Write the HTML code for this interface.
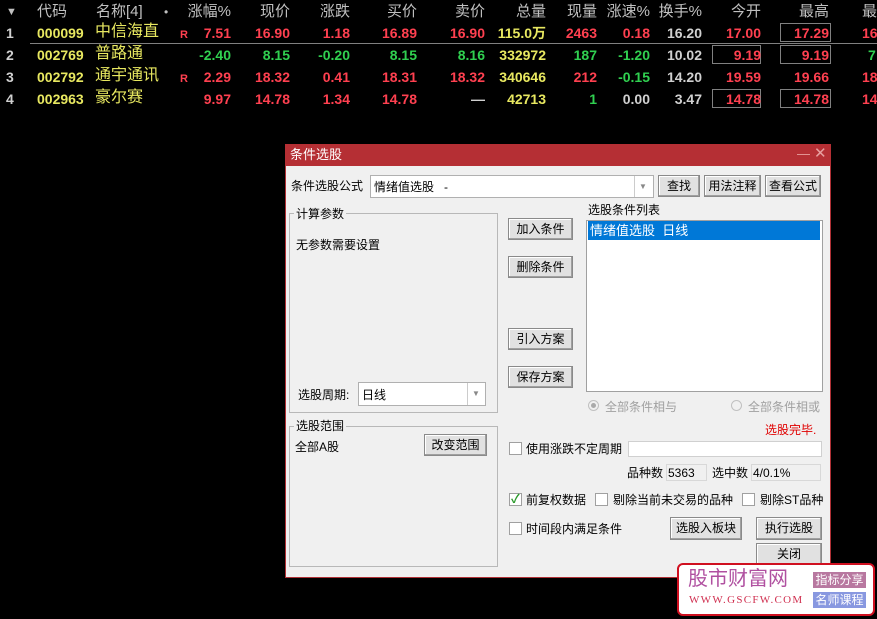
<!DOCTYPE html>
<html><head><meta charset="utf-8">
<style>
*{margin:0;padding:0;box-sizing:border-box}
body{width:877px;height:619px;background:#000;position:relative;overflow:hidden;font-family:"Liberation Sans","Noto Sans CJK SC",sans-serif}
.a{position:absolute;white-space:nowrap}
.h{font-size:15px;color:#c0c0c0;top:3px;line-height:18px}
.r{font-size:14px;font-weight:bold;line-height:18px}
.R{color:#ff4050}.G{color:#30d050}.Y{color:#e8e860}.W{color:#d0d0d0}
.nm{font-size:16px;color:#e8e860;font-weight:normal}
.bx{position:absolute;border:1px solid #808080}
.d{font-size:12px;color:#000;line-height:14px}
.btn{position:absolute;background:#e1e1e1;border:1px solid #8a8a8a;font-size:12px;text-align:center;color:#000;box-shadow:inset -1px -1px 0 #a0a0a0,inset 1px 1px 0 #fff}
.grp{position:absolute;border:1px solid #b8b8b8}
.cb{position:absolute;width:13px;height:13px;border:1px solid #a0a0a0;background:#fff}
.inp{position:absolute;background:#fff;border:1px solid #b0b0b0}
</style></head><body>
<!-- header -->
<div class="a h" style="left:6px;font-size:11px">▼</div>
<div class="a h" style="left:37px">代码</div>
<div class="a h" style="left:96px">名称[4]</div>
<div class="a h" style="left:164px;font-size:12px">•</div>
<div class="a h" style="right:646px">涨幅%</div>
<div class="a h" style="right:587px">现价</div>
<div class="a h" style="right:527px">涨跌</div>
<div class="a h" style="right:460px">买价</div>
<div class="a h" style="right:392px">卖价</div>
<div class="a h" style="right:331px">总量</div>
<div class="a h" style="right:280px">现量</div>
<div class="a h" style="right:227px">涨速%</div>
<div class="a h" style="right:175px">换手%</div>
<div class="a h" style="right:116px">今开</div>
<div class="a h" style="right:48px">最高</div>
<div class="a h" style="left:862px">最</div>
<div class="a" style="left:30px;top:43px;width:847px;height:1px;background:#808080"></div>
<!-- rows -->
<div class="bx" style="left:780px;top:23px;width:51px;height:19px"></div>
<div class="bx" style="left:712px;top:45px;width:49px;height:19px"></div>
<div class="bx" style="left:780px;top:45px;width:51px;height:19px"></div>
<div class="bx" style="left:712px;top:89px;width:49px;height:19px"></div>
<div class="bx" style="left:780px;top:89px;width:51px;height:19px"></div>

<div style="position:absolute;left:0;top:24px;width:877px">
<div class="a r W" style="left:6px">1</div><div class="a r Y" style="left:37px">000099</div><div class="a r nm" style="left:95px;top:-1px">中信海直</div>
<div class="a r R" style="left:180px;font-size:11px;top:2px">R</div>
<div class="a r R" style="right:646px">7.51</div><div class="a r R" style="right:587px">16.90</div><div class="a r R" style="right:527px">1.18</div><div class="a r R" style="right:460px">16.89</div><div class="a r R" style="right:392px">16.90</div><div class="a r Y" style="right:331px">115.0万</div><div class="a r R" style="right:280px">2463</div><div class="a r R" style="right:227px">0.18</div><div class="a r W" style="right:175px">16.20</div><div class="a r R" style="right:116px">17.00</div><div class="a r R" style="right:48px">17.29</div><div class="a r R" style="left:862px">16</div>
</div>
<div style="position:absolute;left:0;top:46px;width:877px">
<div class="a r W" style="left:6px">2</div><div class="a r Y" style="left:37px">002769</div><div class="a r nm" style="left:95px;top:-1px">普路通</div>
<div class="a r G" style="right:646px">-2.40</div><div class="a r G" style="right:587px">8.15</div><div class="a r G" style="right:527px">-0.20</div><div class="a r G" style="right:460px">8.15</div><div class="a r G" style="right:392px">8.16</div><div class="a r Y" style="right:331px">332972</div><div class="a r G" style="right:280px">187</div><div class="a r G" style="right:227px">-1.20</div><div class="a r W" style="right:175px">10.02</div><div class="a r R" style="right:116px">9.19</div><div class="a r R" style="right:48px">9.19</div><div class="a r G" style="left:868px">7</div>
</div>
<div style="position:absolute;left:0;top:68px;width:877px">
<div class="a r W" style="left:6px">3</div><div class="a r Y" style="left:37px">002792</div><div class="a r nm" style="left:95px;top:-1px">通宇通讯</div>
<div class="a r R" style="left:180px;font-size:11px;top:2px">R</div>
<div class="a r R" style="right:646px">2.29</div><div class="a r R" style="right:587px">18.32</div><div class="a r R" style="right:527px">0.41</div><div class="a r R" style="right:460px">18.31</div><div class="a r R" style="right:392px">18.32</div><div class="a r Y" style="right:331px">340646</div><div class="a r R" style="right:280px">212</div><div class="a r G" style="right:227px">-0.15</div><div class="a r W" style="right:175px">14.20</div><div class="a r R" style="right:116px">19.59</div><div class="a r R" style="right:48px">19.66</div><div class="a r R" style="left:862px">18</div>
</div>
<div style="position:absolute;left:0;top:90px;width:877px">
<div class="a r W" style="left:6px">4</div><div class="a r Y" style="left:37px">002963</div><div class="a r nm" style="left:95px;top:-1px">豪尔赛</div>
<div class="a r R" style="right:646px">9.97</div><div class="a r R" style="right:587px">14.78</div><div class="a r R" style="right:527px">1.34</div><div class="a r R" style="right:460px">14.78</div><div class="a r W" style="right:392px">—</div><div class="a r Y" style="right:331px">42713</div><div class="a r G" style="right:280px">1</div><div class="a r W" style="right:227px">0.00</div><div class="a r W" style="right:175px">3.47</div><div class="a r R" style="right:116px">14.78</div><div class="a r R" style="right:48px">14.78</div><div class="a r R" style="left:862px">14</div>
</div>

<!-- dialog -->
<div class="a" style="left:285px;top:144px;width:546px;height:434px;background:#f0f0f0;border:1px solid #b03035"></div>
<div class="a" style="left:285px;top:144px;width:546px;height:22px;background:#b52f34"></div>
<div class="a d" style="left:290px;top:148px;color:#fff;font-size:13px">条件选股</div>
<div class="a" style="left:797px;top:146px;color:#e8a0a0;font-size:13px">—</div>
<div class="a" style="left:814px;top:144px;color:#e8a0a0;font-size:15px">✕</div>

<div class="a d" style="left:291px;top:179px">条件选股公式</div>
<div class="inp" style="left:370px;top:175px;width:284px;height:23px"></div>
<div class="a d" style="left:374px;top:180px">情绪值选股&nbsp;&nbsp;&nbsp;-</div>
<div class="a" style="left:634px;top:176px;width:1px;height:21px;background:#ccc"></div>
<div class="a" style="left:639px;top:182px;color:#888;font-size:8px">▼</div>
<div class="btn" style="left:658px;top:175px;width:42px;height:22px;line-height:20px">查找</div>
<div class="btn" style="left:704px;top:175px;width:57px;height:22px;line-height:20px">用法注释</div>
<div class="btn" style="left:765px;top:175px;width:56px;height:22px;line-height:20px">查看公式</div>

<div class="grp" style="left:289px;top:213px;width:209px;height:200px"></div>
<div class="a d" style="left:294px;top:207px;background:#f0f0f0;padding:0 2px">计算参数</div>
<div class="a d" style="left:296px;top:238px">无参数需要设置</div>
<div class="a d" style="left:298px;top:388px">选股周期:</div>
<div class="inp" style="left:358px;top:382px;width:128px;height:24px"></div>
<div class="a d" style="left:362px;top:388px">日线</div>
<div class="a" style="left:467px;top:383px;width:1px;height:22px;background:#ccc"></div>
<div class="a" style="left:472px;top:389px;color:#888;font-size:8px">▼</div>

<div class="grp" style="left:289px;top:426px;width:209px;height:141px"></div>
<div class="a d" style="left:294px;top:419px;background:#f0f0f0;padding:0 2px">选股范围</div>
<div class="a d" style="left:295px;top:440px">全部A股</div>
<div class="btn" style="left:424px;top:434px;width:63px;height:22px;line-height:20px">改变范围</div>

<div class="btn" style="left:508px;top:218px;width:65px;height:22px;line-height:20px">加入条件</div>
<div class="btn" style="left:508px;top:256px;width:65px;height:22px;line-height:20px">删除条件</div>
<div class="btn" style="left:508px;top:328px;width:65px;height:22px;line-height:20px">引入方案</div>
<div class="btn" style="left:508px;top:366px;width:65px;height:22px;line-height:20px">保存方案</div>

<div class="a d" style="left:588px;top:203px">选股条件列表</div>
<div class="inp" style="left:586px;top:220px;width:237px;height:172px;border-color:#a0a0a0"></div>
<div class="a" style="left:588px;top:221px;width:232px;height:19px;background:#0078d7"></div>
<div class="a d" style="left:590px;top:224px;color:#fff;font-size:13px">情绪值选股&nbsp;&nbsp;日线</div>

<div class="a" style="left:588px;top:400px;width:11px;height:11px;border-radius:50%;border:1px solid #c0c0c0;background:#f0f0f0"></div>
<div class="a" style="left:591px;top:403px;width:5px;height:5px;border-radius:50%;background:#aaa"></div>
<div class="a d" style="left:605px;top:400px;color:#a0a0a0">全部条件相与</div>
<div class="a" style="left:731px;top:400px;width:11px;height:11px;border-radius:50%;border:1px solid #c0c0c0;background:#f0f0f0"></div>
<div class="a d" style="left:748px;top:400px;color:#a0a0a0">全部条件相或</div>
<div class="a d" style="left:765px;top:423px;color:#e00000">选股完毕.</div>

<div class="cb" style="left:509px;top:442px"></div>
<div class="a d" style="left:526px;top:442px">使用涨跌不定周期</div>
<div class="inp" style="left:628px;top:441px;width:194px;height:16px;border-color:#d0d0d0"></div>
<div class="a d" style="left:627px;top:466px">品种数</div>
<div class="a" style="left:666px;top:464px;width:41px;height:17px;border:1px solid #d8d8d8"></div>
<div class="a d" style="left:668px;top:466px">5363</div>
<div class="a d" style="left:712px;top:466px">选中数</div>
<div class="a" style="left:751px;top:464px;width:70px;height:17px;border:1px solid #d8d8d8"></div>
<div class="a d" style="left:753px;top:466px">4/0.1%</div>

<div class="cb" style="left:509px;top:493px"></div>
<div class="a" style="left:511px;top:490px;color:#2a9a2a;font-size:12px;font-weight:bold">✓</div>
<div class="a d" style="left:526px;top:493px">前复权数据</div>
<div class="cb" style="left:595px;top:493px"></div>
<div class="a d" style="left:613px;top:493px">剔除当前未交易的品种</div>
<div class="cb" style="left:742px;top:493px"></div>
<div class="a d" style="left:760px;top:493px">剔除ST品种</div>

<div class="cb" style="left:509px;top:522px"></div>
<div class="a d" style="left:526px;top:522px">时间段内满足条件</div>
<div class="btn" style="left:670px;top:517px;width:72px;height:23px;line-height:21px">选股入板块</div>
<div class="btn" style="left:756px;top:517px;width:66px;height:23px;line-height:21px">执行选股</div>
<div class="btn" style="left:756px;top:543px;width:66px;height:23px;line-height:21px">关闭</div>

<!-- logo -->
<div class="a" style="left:677px;top:563px;width:198px;height:53px;background:#fff;border:2px solid #d01020;border-radius:6px"></div>
<div class="a" style="left:688px;top:567px;font-size:20px;color:#b050a0;letter-spacing:0px;line-height:24px">股市财富网</div>
<div class="a" style="left:689px;top:594px;font-size:11px;color:#d03050;font-family:'Liberation Serif',serif;letter-spacing:1.3px">WWW.GSCFW.COM</div>
<div class="a" style="left:813px;top:572px;width:53px;height:16px;background:#b878a0;color:#fff;font-size:12px;line-height:16px;text-align:center">指标分享</div>
<div class="a" style="left:813px;top:592px;width:53px;height:16px;background:#8898e0;color:#fff;font-size:12px;line-height:16px;text-align:center">名师课程</div>
</body></html>
